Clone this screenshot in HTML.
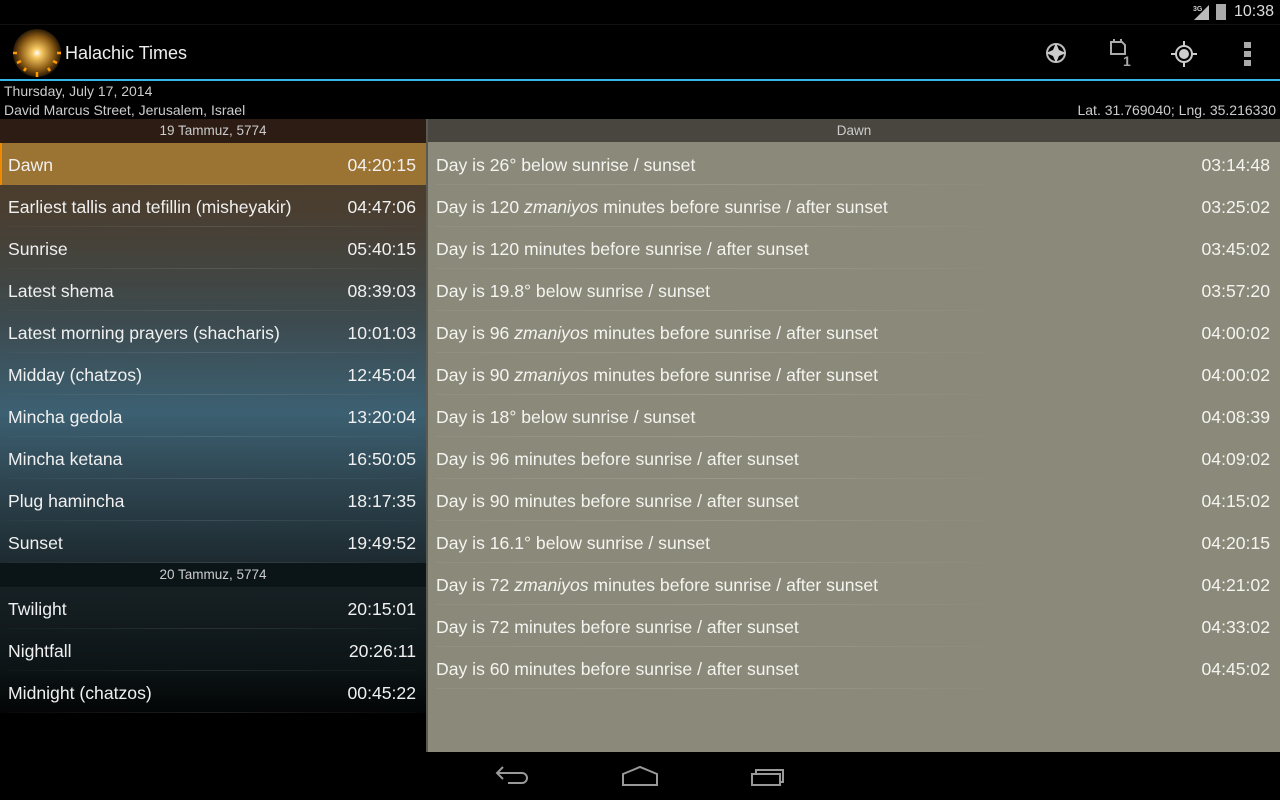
<!DOCTYPE html>
<html><head><style>
*{margin:0;padding:0;box-sizing:border-box}
body{width:1280px;height:800px;background:#000;font-family:"Liberation Sans",sans-serif;color:#eee;position:relative;overflow:hidden}
.abs{position:absolute}
.row{position:absolute;left:0;width:426px;height:42px;font-size:17.6px;line-height:44px;padding:0 10px 0 8px;color:#f0f0f0}
.row span{float:right}
.row:after{content:"";position:absolute;left:8px;right:10px;bottom:0;height:1px;background:linear-gradient(90deg,rgba(255,255,255,0.02),rgba(255,255,255,0.1),rgba(255,255,255,0.02))}
.rr{position:absolute;left:428px;width:852px;height:42px;font-size:17.6px;line-height:44px;padding:0 10px 0 8px;color:#f4f4f0}
.rr span{float:right}
.rr:after{content:"";position:absolute;left:8px;width:580px;bottom:0;height:1px;background:linear-gradient(90deg,rgba(255,255,255,0.05),rgba(255,255,255,0.13),rgba(255,255,255,0))}
.hdr{position:absolute;height:24px;font-size:13.5px;line-height:24px;text-align:center;color:#ccc}
.sm{font-size:14px;color:#ccc}
</style></head><body>
<div class="abs" style="left:0;top:0;width:1280px;height:25px;border-bottom:1px solid #111"></div>
<svg class="abs" style="left:1192px;top:4px" width="20" height="17"><text x="1" y="7" font-size="7" fill="#ccc" font-family="Liberation Sans" font-weight="bold">3G</text><polygon points="2,16 17,16 17,1" fill="#bbb"/></svg>
<div class="abs" style="left:1216px;top:4px;width:10px;height:16px;background:#aaa"></div>
<div class="abs" style="left:1234px;top:3px;font-size:16px;color:#ddd">10:38</div>
<svg class="abs" style="left:12px;top:28px" width="50" height="50"><defs><radialGradient id="g"><stop offset="0" stop-color="#fff"/><stop offset="0.2" stop-color="#f6c760"/><stop offset="0.7" stop-color="#8a5a14"/><stop offset="1" stop-color="#2a1a05"/></radialGradient></defs><circle cx="25" cy="25" r="24" fill="url(#g)"/><g stroke="#ff9a00" stroke-width="2.5"><line x1="1" y1="25" x2="5" y2="25"/><line x1="45" y1="25" x2="49" y2="25"/><line x1="25" y1="44" x2="25" y2="49"/><line x1="5" y1="35" x2="9" y2="33"/><line x1="12" y1="43" x2="14" y2="40"/><line x1="45" y1="35" x2="41" y2="33"/><line x1="38" y1="43" x2="36" y2="40"/></g></svg>
<div class="abs" style="left:65px;top:43px;font-size:18px;color:#eee">Halachic Times</div>
<svg class="abs" style="left:1044px;top:41px" width="24" height="24"><circle cx="12" cy="12" r="9" fill="none" stroke="#bbb" stroke-width="2"/><polygon points="12,2 15,9 22,12 15,15 12,22 9,15 2,12 9,9" fill="#ccc"/></svg>
<svg class="abs" style="left:1108px;top:38px" width="26" height="30"><path d="M3 4h11l3 3v9H3z" fill="none" stroke="#aaa" stroke-width="2"/><line x1="6" y1="1" x2="6" y2="5" stroke="#aaa" stroke-width="2"/><line x1="13" y1="1" x2="13" y2="5" stroke="#aaa" stroke-width="2"/><text x="15" y="28" font-size="14" font-weight="bold" fill="#aaa" font-family="Liberation Sans">1</text></svg>
<svg class="abs" style="left:1171px;top:41px" width="26" height="26"><circle cx="13" cy="13" r="8" fill="none" stroke="#ccc" stroke-width="2"/><circle cx="13" cy="13" r="5" fill="#ccc"/><g stroke="#ccc" stroke-width="2"><line x1="13" y1="0" x2="13" y2="5"/><line x1="13" y1="21" x2="13" y2="26"/><line x1="0" y1="13" x2="5" y2="13"/><line x1="21" y1="13" x2="26" y2="13"/></g></svg>
<div class="abs" style="left:1244px;top:42px;width:7px;height:6px;background:#aaa;box-shadow:0 9px 0 #aaa,0 18px 0 #aaa"></div>
<div class="abs" style="left:0;top:79px;width:1280px;height:2px;background:#33b5e5"></div>
<div class="abs sm" style="left:4px;top:83px">Thursday, July 17, 2014</div>
<div class="abs sm" style="left:4px;top:102px">David Marcus Street, Jerusalem, Israel</div>
<div class="abs sm" style="right:4px;top:102px">Lat. 31.769040; Lng. 35.216330</div>
<div class="abs" style="left:0;top:119px;width:426px;height:444px;background:linear-gradient(180deg,#4d3a29 0%,#4a3e30 20%,#3d4a4e 45%,#3c6072 66%,#2e4550 82%,#1d2a30 100%)"></div>
<div class="abs" style="left:0;top:563px;width:426px;height:150px;background:linear-gradient(180deg,#1a2428 0%,#0c1416 70%,#030506 100%)"></div>
<div class="hdr" style="left:0;top:119px;width:426px;background:#2c1c13">19 Tammuz, 5774</div>
<div class="row" style="top:143px;background:#9b7333;border-left:2px solid #f08a00;padding-left:6px">Dawn<span>04:20:15</span></div>
<div class="row" style="top:185px">Earliest tallis and tefillin (misheyakir)<span>04:47:06</span></div>
<div class="row" style="top:227px">Sunrise<span>05:40:15</span></div>
<div class="row" style="top:269px">Latest shema<span>08:39:03</span></div>
<div class="row" style="top:311px">Latest morning prayers (shacharis)<span>10:01:03</span></div>
<div class="row" style="top:353px">Midday (chatzos)<span>12:45:04</span></div>
<div class="row" style="top:395px">Mincha gedola<span>13:20:04</span></div>
<div class="row" style="top:437px">Mincha ketana<span>16:50:05</span></div>
<div class="row" style="top:479px">Plug hamincha<span>18:17:35</span></div>
<div class="row" style="top:521px">Sunset<span>19:49:52</span></div>
<div class="hdr" style="left:0;top:563px;width:426px;background:#0b1518">20 Tammuz, 5774</div>
<div class="row" style="top:587px">Twilight<span>20:15:01</span></div>
<div class="row" style="top:629px">Nightfall<span>20:26:11</span></div>
<div class="row" style="top:671px">Midnight (chatzos)<span>00:45:22</span></div>
<div class="abs" style="left:426px;top:119px;width:2px;height:633px;background:#5a5a52"></div>
<div class="abs" style="left:428px;top:119px;width:852px;height:633px;background:#8b897a"></div>
<div class="hdr" style="left:428px;top:119px;width:852px;height:23px;background:#48463e">Dawn</div>
<div class="rr" style="top:143px">Day is 26° below sunrise / sunset<span>03:14:48</span></div>
<div class="rr" style="top:185px">Day is 120 <i>zmaniyos</i> minutes before sunrise / after sunset<span>03:25:02</span></div>
<div class="rr" style="top:227px">Day is 120 minutes before sunrise / after sunset<span>03:45:02</span></div>
<div class="rr" style="top:269px">Day is 19.8° below sunrise / sunset<span>03:57:20</span></div>
<div class="rr" style="top:311px">Day is 96 <i>zmaniyos</i> minutes before sunrise / after sunset<span>04:00:02</span></div>
<div class="rr" style="top:353px">Day is 90 <i>zmaniyos</i> minutes before sunrise / after sunset<span>04:00:02</span></div>
<div class="rr" style="top:395px">Day is 18° below sunrise / sunset<span>04:08:39</span></div>
<div class="rr" style="top:437px">Day is 96 minutes before sunrise / after sunset<span>04:09:02</span></div>
<div class="rr" style="top:479px">Day is 90 minutes before sunrise / after sunset<span>04:15:02</span></div>
<div class="rr" style="top:521px">Day is 16.1° below sunrise / sunset<span>04:20:15</span></div>
<div class="rr" style="top:563px">Day is 72 <i>zmaniyos</i> minutes before sunrise / after sunset<span>04:21:02</span></div>
<div class="rr" style="top:605px">Day is 72 minutes before sunrise / after sunset<span>04:33:02</span></div>
<div class="rr" style="top:647px">Day is 60 minutes before sunrise / after sunset<span>04:45:02</span></div>
<svg class="abs" style="left:494px;top:764px" width="36" height="24"><path d="M3 9h25a5 5 0 0 1 0 10H14M9 3L3 9l6 6" fill="none" stroke="#999" stroke-width="2"/></svg>
<svg class="abs" style="left:620px;top:764px" width="40" height="24"><path d="M3 21V10L20 3l17 7v11z" fill="none" stroke="#999" stroke-width="2"/></svg>
<svg class="abs" style="left:750px;top:767px" width="38" height="20"><rect x="2" y="7" width="28" height="11" fill="none" stroke="#999" stroke-width="2"/><path d="M6 6V3h27v12h-2" fill="none" stroke="#999" stroke-width="2"/></svg>
</body></html>
